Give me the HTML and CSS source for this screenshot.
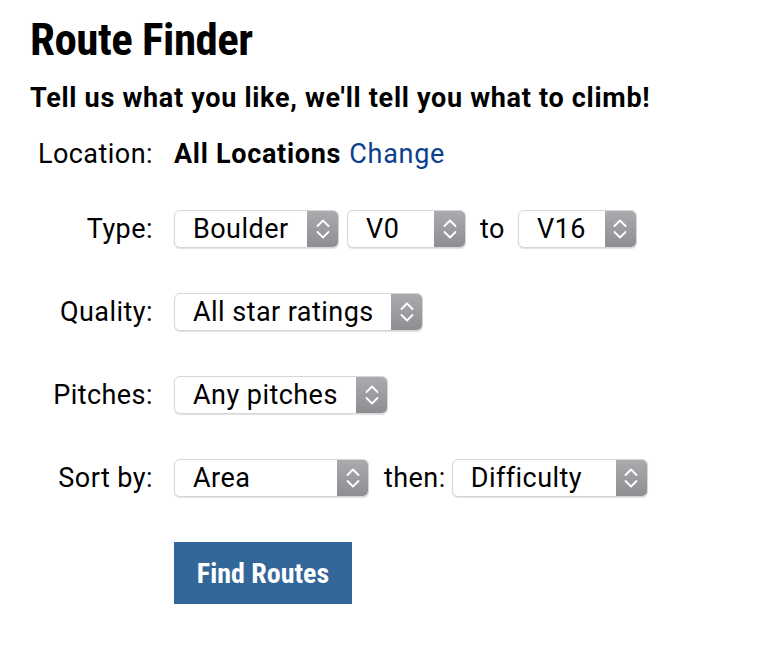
FILE: index.html
```html
<!DOCTYPE html>
<html lang="en">
<head>
  <meta charset="UTF-8">
  <title>Route Finder</title>
  <meta name="viewport" content="width=device-width, initial-scale=1.0">
  <link rel="stylesheet" href="styles.css">
</head>
<body>

  <h1>Route Finder</h1>
  <p class="intro">Tell us what you like, we'll tell you what to climb!</p>

  <form class="finder">
    <div class="label loc">Location:</div>
    <div class="field loc"><b>All Locations</b> <a href="#">Change</a></div>

    <div class="label">Type:</div>
    <div class="field">
      <div class="select w-type"><span>Boulder</span><i class="arrow"></i></div>
      <div class="select w-grade"><span>V0</span><i class="arrow"></i></div>
      <span class="word to">to</span>
      <div class="select w-grade"><span>V16</span><i class="arrow"></i></div>
    </div>

    <div class="label">Quality:</div>
    <div class="field">
      <div class="select w-quality"><span>All star ratings</span><i class="arrow"></i></div>
    </div>

    <div class="label">Pitches:</div>
    <div class="field">
      <div class="select w-pitches"><span>Any pitches</span><i class="arrow"></i></div>
    </div>

    <div class="label">Sort by:</div>
    <div class="field">
      <div class="select w-sort"><span>Area</span><i class="arrow"></i></div>
      <span class="word then">then:</span>
      <div class="select w-sort2"><span>Difficulty</span><i class="arrow"></i></div>
    </div>

    <div></div>
    <div class="field submit"><button type="button">Find Routes</button></div>
  </form>

  <script>
    // Pfeil-Icon in jede Auswahl setzen
    const chevrons = '<svg width="14" height="24" viewBox="0 0 14 24"><path d="M1.5 9 L7 3.5 L12.5 9 M1.5 15 L7 20.5 L12.5 15" fill="none" stroke="#fff" stroke-width="1.8" stroke-linecap="round" stroke-linejoin="round"/></svg>';
    document.querySelectorAll('.arrow').forEach(a => { a.innerHTML = chevrons; });
  </script>

</body>
</html>
```

FILE: styles.css
```css
/* Grundlayout */
body {
  margin: 0;
  padding: 0 0 0 30px;
  font-family: Roboto, "Liberation Sans", sans-serif;
  background: #fff;
  color: #000;
}
h1 {
  margin: 0;
  padding-top: 15px;
  font-size: 45px;
  line-height: 50px;
  font-weight: 700;
  font-stretch: condensed;
  letter-spacing: -0.5px;
}
.intro {
  margin: 18px 0 0;
  font-size: 27px;
  line-height: 30px;
  font-weight: 700;
  letter-spacing: 0.7px;
}
/* Formular-Raster */
.finder {
  display: grid;
  grid-template-columns: 123px auto;
  column-gap: 21px;
  row-gap: 45px;
  margin-top: 22px;
  font-size: 27px;
  letter-spacing: 0.45px;
}
.label {
  text-align: right;
  height: 38px;
  line-height: 38px;
}
.label.loc, .field.loc {
  display: block;
  height: 30px;
  line-height: 38px;
}
.field {
  display: flex;
  align-items: center;
  height: 38px;
}
.field b { font-weight: 700; letter-spacing: 0.7px; }
.field a {
  color: #0d3f8f;
  text-decoration: none;
  margin-left: 1px;
  letter-spacing: 0.7px;
}
/* Auswahlfelder */
.select {
  display: flex;
  height: 38px;
  box-sizing: border-box;
  border: 1px solid #d6d6d6;
  border-radius: 6px;
  background: #fff;
  box-shadow: 0 1px 1px rgba(0,0,0,0.12);
  overflow: hidden;
  margin-right: 8px;
}
.select span {
  flex: 1;
  padding-left: 18px;
  line-height: 36px;
  white-space: nowrap;
}
.arrow {
  width: 31px;
  display: flex;
  align-items: center;
  justify-content: center;
  background: linear-gradient(#ababaf, #8e8e92);
}
.w-type    { width: 165px; }
.w-grade   { width: 119px; }
.w-quality { width: 249px; }
.w-pitches { width: 214px; }
.w-sort    { width: 195px; }
.w-sort2   { width: 196px; }
.word.to   { margin: 0 13px 0 6px; }
.word.then { margin: 0 6px 0 7px; }
/* Button */
.submit { height: 62px; margin-top: 0; }
.submit button {
  width: 178px;
  height: 62px;
  border: none;
  background: #336699;
  color: #fff;
  font-family: Roboto, sans-serif;
  font-size: 28px;
  font-weight: 700;
  font-stretch: condensed;
  letter-spacing: 0;
  cursor: pointer;
}
```
